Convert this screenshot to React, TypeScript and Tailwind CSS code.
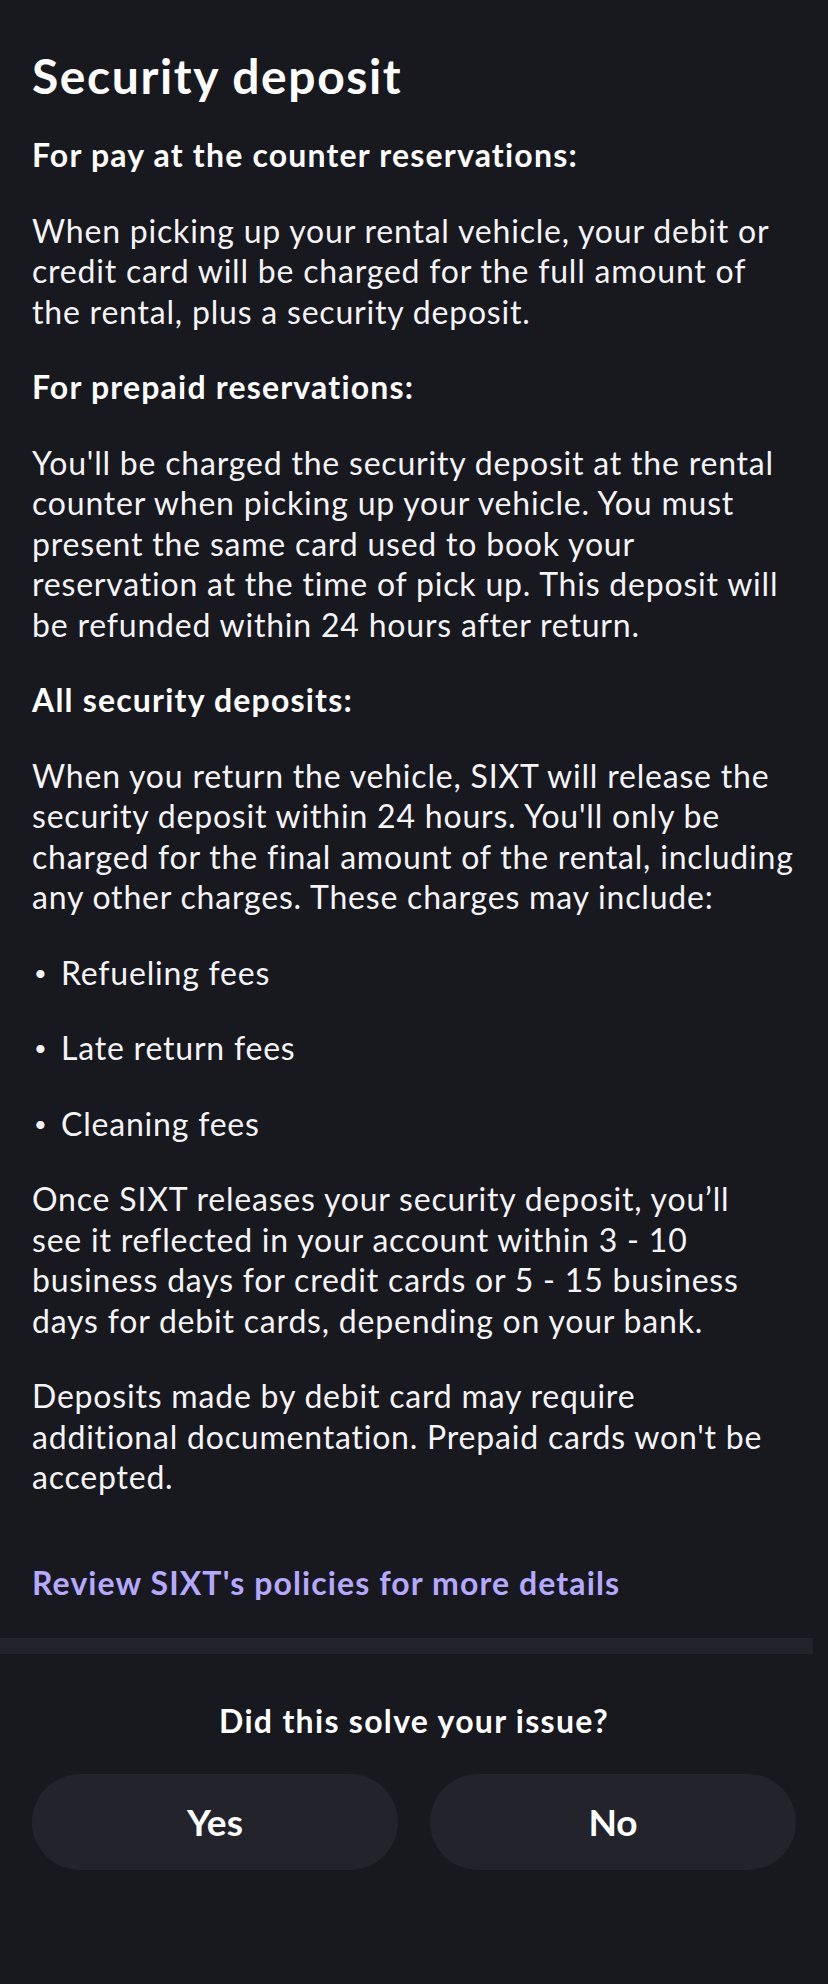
import React from "react";

const bullets = ["Refueling fees", "Late return fees", "Cleaning fees"];

export default function App() {
  return (
    <div className="min-h-screen w-full bg-[#18181f] text-white" style={{ fontFamily: "Lato, 'Open Sans', sans-serif" }}>
      <div className="px-8 pt-[44px]">
        <h1 className="text-[48px] font-bold leading-[64px] tracking-[1.6px]">Security deposit</h1>

        <div className="mt-[27px] flex flex-col gap-[35px] text-[32px] leading-[40.5px] tracking-[0.8px] text-[#f4f4f6]">
          <h3 className="font-bold tracking-[1.2px] text-white">For pay at the counter reservations:</h3>
          <p>
            When picking up your rental vehicle, your debit or credit card will be charged for the full amount of the
            rental, plus a security deposit.
          </p>
          <h3 className="font-bold tracking-[1.2px] text-white">For prepaid reservations:</h3>
          <p>
            You'll be charged the security deposit at the rental counter when picking up your vehicle. You must present
            the same card used to book your reservation at the time of pick up. This deposit will be refunded within 24
            hours after return.
          </p>
          <h3 className="font-bold tracking-[1.2px] text-white">All security deposits:</h3>
          <p>
            When you return the vehicle, SIXT will release the security deposit within 24 hours. You'll only be charged
            for the final amount of the rental, including any other charges. These charges may include:
          </p>
          {bullets.map((b) => (
            <div key={b} className="flex items-center">
              <span className="w-[29px] shrink-0 pl-[2px] text-[22px]">•</span>
              <span>{b}</span>
            </div>
          ))}
          <p className="pr-[12px]">
            Once SIXT releases your security deposit, you’ll see it reflected in your account within 3 - 10 business
            days for credit cards or 5 - 15 business days for debit cards, depending on your bank.
          </p>
          <p className="pr-[12px]">
            Deposits made by debit card may require additional documentation. Prepaid cards won't be accepted.
          </p>
        </div>

        <a href="#" className="mt-[65px] block text-[32px] font-bold leading-[40px] tracking-[1.1px] text-[#b5a9ff]">
          Review SIXT's policies for more details
        </a>
      </div>

      <div className="mt-[35px] h-4 w-[813px] bg-[#22232b]" />

      <div className="px-8 pt-[47px] pb-[113px]">
        <p className="text-center text-[32px] font-bold leading-[40px] tracking-[1.3px]">Did this solve your issue?</p>
        <div className="mt-[33px] grid grid-cols-2 gap-8">
          <button className="h-24 rounded-full bg-[#22232b] text-[37px] font-bold text-white">Yes</button>
          <button className="h-24 rounded-full bg-[#22232b] text-[37px] font-bold text-white">No</button>
        </div>
      </div>
    </div>
  );
}
